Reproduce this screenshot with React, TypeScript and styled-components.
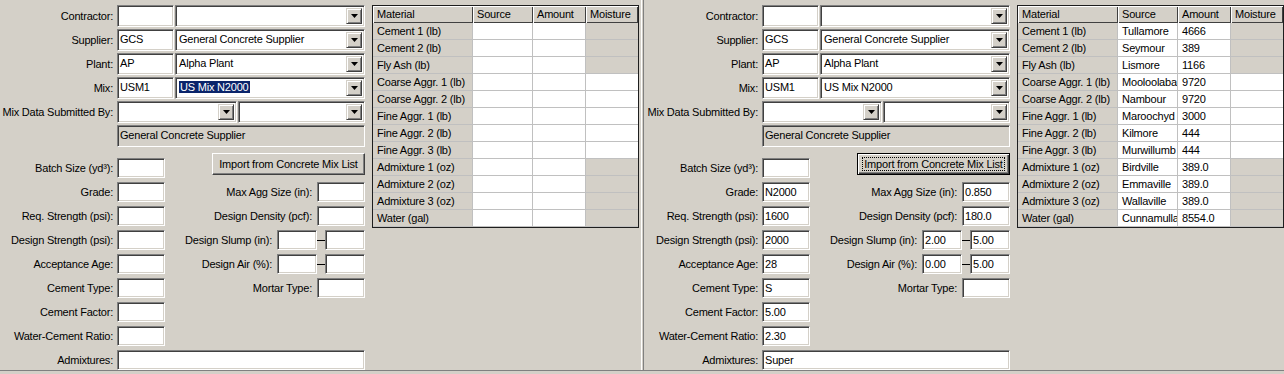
import React from 'react';
import styled, { createGlobalStyle, css } from 'styled-components';

const GlobalStyle = createGlobalStyle`
  html, body {
    margin: 0;
    padding: 0;
    background: #d4d0c8;
  }
  body {
    font-family: "Liberation Sans", Arial, sans-serif;
    font-size: 11px;
    letter-spacing: -0.2px;
    color: #000;
    overflow: hidden;
  }
`;

interface IMixValues {
  batch: string;
  grade: string;
  reqStrength: string;
  designStrength: string;
  age: string;
  cementType: string;
  cementFactor: string;
  wcRatio: string;
  admixtures: string;
  maxAgg: string;
  density: string;
  slump: [string, string];
  air: [string, string];
  mortar: string;
}

interface IPanel {
  values: IMixValues;
  sources: string[];
  amounts: string[];
  highlightMix?: boolean;
  importFocused?: boolean;
}

const materials = [
  'Cement 1 (lb)',
  'Cement 2 (lb)',
  'Fly Ash (lb)',
  'Coarse Aggr. 1 (lb)',
  'Coarse Aggr. 2 (lb)',
  'Fine Aggr. 1 (lb)',
  'Fine Aggr. 2 (lb)',
  'Fine Aggr. 3 (lb)',
  'Admixture 1 (oz)',
  'Admixture 2 (oz)',
  'Admixture 3 (oz)',
  'Water (gal)',
];

// moisture is only editable for aggregates
const moistureEditable = [false, false, false, true, true, true, true, true, false, false, false, false];

const Screen = styled.div`
  display: flex;
  width: 1284px;
  height: 370px;
  border-bottom: 1px solid #808080;
  box-shadow: 0 1px 0 #fff;
  overflow: hidden;
`;

const Panel = styled.div`
  flex: none;
  width: 641px;
  box-sizing: border-box;
  display: flex;
  align-items: flex-start;
  gap: 7px;
  padding-top: 5px;
`;

const Separator = styled.div`
  flex: none;
  width: 1px;
  border-left: 1px solid #fff;
  border-right: 1px solid #808080;
  margin-right: 1px;
`;

const Form = styled.div`
  flex: none;
  width: 365px;
  display: flex;
  flex-direction: column;
`;

const TopGrid = styled.div`
  display: grid;
  grid-template-columns: 113px 248px;
  grid-auto-rows: 22px;
  column-gap: 4px;
  row-gap: 2px;
`;

const Label = styled.div`
  align-self: center;
  text-align: right;
  white-space: nowrap;
`;

const FieldGroup = styled.div`
  display: flex;
  gap: 1px;
  height: 100%;
`;

const sunken = css`
  box-sizing: border-box;
  border: 1px solid;
  border-color: #808080 #fff #fff #808080;
  box-shadow: inset 1px 1px 0 #404040, inset -1px -1px 0 #d4d0c8;
`;

const TextBox = styled.div<{ $w?: number; $readOnly?: boolean; $top?: boolean }>`
  ${sunken};
  flex: ${(p) => (p.$w ? 'none' : '1')};
  width: ${(p) => (p.$w ? `${p.$w}px` : 'auto')};
  height: 100%;
  background: ${(p) => (p.$readOnly ? '#d4d0c8' : '#fff')};
  padding: ${(p) => (p.$top ? '0 2px 2px' : '0 2px')};
  display: flex;
  align-items: center;
  white-space: nowrap;
  overflow: hidden;
`;

const ComboBox = styled.div<{ $w?: number }>`
  ${sunken};
  flex: ${(p) => (p.$w ? 'none' : '1')};
  width: ${(p) => (p.$w ? `${p.$w}px` : 'auto')};
  height: 100%;
  background: #fff;
  padding: 2px;
  display: flex;
`;

const ComboText = styled.div`
  flex: 1;
  padding: 0 0 2px 1px;
  display: flex;
  align-items: center;
  white-space: nowrap;
  overflow: hidden;
`;

const Selected = styled.span`
  background: #0a246a;
  color: #fff;
  padding: 0 1px;
`;

const DropButton = styled.div`
  flex: none;
  width: 16px;
  height: 100%;
  box-sizing: border-box;
  background: #d4d0c8;
  border: 1px solid;
  border-color: #d4d0c8 #404040 #404040 #d4d0c8;
  box-shadow: inset 1px 1px 0 #fff, inset -1px -1px 0 #808080;
  display: flex;
  align-items: center;
  justify-content: center;
`;

const BottomGrid = styled.div`
  margin-top: 11px;
  display: grid;
  grid-template-columns: 165px 200px;
  grid-auto-rows: 20px;
  row-gap: 4px;
`;

const Field = styled.div<{ $wide?: boolean; $gap?: number }>`
  display: flex;
  align-items: center;
  justify-content: flex-end;
  gap: ${(p) => p.$gap ?? 4}px;
  grid-column: ${(p) => (p.$wide ? '1 / -1' : 'auto')};
  height: 20px;
`;

const RangeGroup = styled.div`
  display: flex;
  align-items: center;
  height: 100%;
`;

const Dash = styled.div`
  width: 8px;
  height: 1px;
  background: #000;
`;

const ImportButton = styled.div<{ $focused?: boolean }>`
  position: relative;
  justify-self: end;
  align-self: start;
  margin-top: -5px;
  width: 153px;
  height: 22px;
  box-sizing: border-box;
  background: #d4d0c8;
  display: flex;
  align-items: center;
  justify-content: center;
  white-space: nowrap;
  padding-bottom: 1px;
  border: 1px solid;
  ${(p) =>
    p.$focused
      ? css`
          border-color: #000;
          box-shadow: inset 1px 1px 0 #fff, inset -1px -1px 0 #404040, inset -2px -2px 0 #808080;
          &::after {
            content: '';
            position: absolute;
            inset: 3px 4px 3px 4px;
            border: 1px dotted #000;
          }
        `
      : css`
          border-color: #fff #404040 #404040 #fff;
          box-shadow: inset -1px -1px 0 #808080;
        `}
`;

const MatTable = styled.div`
  flex: none;
  display: grid;
  grid-template-columns: 100px 60px 53px 52px;
  grid-auto-rows: 17px;
  border: 1px solid #1e1e1e;
`;

const HeadCell = styled.div`
  box-sizing: border-box;
  background: #d4d0c8;
  box-shadow: inset 1px 1px 0 #fff, inset -1px -1px 0 #404040;
  padding: 0 4px 1px;
  line-height: 16px;
  white-space: nowrap;
  overflow: hidden;
`;

const Cell = styled.div<{ $gray?: boolean; $last?: boolean }>`
  box-sizing: border-box;
  background: ${(p) => (p.$gray ? '#d4d0c8' : '#fff')};
  border-bottom: 1px solid #c0c0c0;
  border-right: ${(p) => (p.$last ? 'none' : '1px solid #c0c0c0')};
  padding: 0 3px 0 4px;
  line-height: 16px;
  white-space: nowrap;
  overflow: hidden;
`;

const Arrow = () => (
  <svg width="7" height="4" viewBox="0 0 7 4">
    <path d="M0 0h7L3.5 4z" fill="#000" />
  </svg>
);

const Combo: React.FC<{ w?: number; children?: React.ReactNode }> = ({ w, children }) => (
  <ComboBox $w={w}>
    <ComboText>{children}</ComboText>
    <DropButton>
      <Arrow />
    </DropButton>
  </ComboBox>
);

const SmallField: React.FC<{ label: string; value: string }> = ({ label, value }) => (
  <Field>
    <Label>{label}</Label>
    <TextBox $w={48}>{value}</TextBox>
  </Field>
);

const RightField: React.FC<{ label: string; value: string }> = ({ label, value }) => (
  <Field $gap={5}>
    <Label>{label}</Label>
    <TextBox $w={48}>{value}</TextBox>
  </Field>
);

const RangeField: React.FC<{ label: string; range: [string, string] }> = ({ label, range }) => (
  <Field $gap={5}>
    <Label>{label}</Label>
    <RangeGroup>
      <TextBox $w={40}>{range[0]}</TextBox>
      <Dash />
      <TextBox $w={40}>{range[1]}</TextBox>
    </RangeGroup>
  </Field>
);

const MixPanel: React.FC<IPanel> = ({ values, sources, amounts, highlightMix, importFocused }) => (
  <Panel>
    <Form>
      <TopGrid>
        <Label>Contractor:</Label>
        <FieldGroup>
          <TextBox $w={57} $top />
          <Combo />
        </FieldGroup>
        <Label>Supplier:</Label>
        <FieldGroup>
          <TextBox $w={57} $top>GCS</TextBox>
          <Combo>General Concrete Supplier</Combo>
        </FieldGroup>
        <Label>Plant:</Label>
        <FieldGroup>
          <TextBox $w={57} $top>AP</TextBox>
          <Combo>Alpha Plant</Combo>
        </FieldGroup>
        <Label>Mix:</Label>
        <FieldGroup>
          <TextBox $w={57} $top>USM1</TextBox>
          <Combo>{highlightMix ? <Selected>US Mix N2000</Selected> : 'US Mix N2000'}</Combo>
        </FieldGroup>
        <Label>Mix Data Submitted By:</Label>
        <FieldGroup>
          <Combo w={120} />
          <Combo />
        </FieldGroup>
        <div />
        <TextBox $readOnly $top>General Concrete Supplier</TextBox>
      </TopGrid>

      <BottomGrid>
        <SmallField label="Batch Size (yd³):" value={values.batch} />
        <ImportButton $focused={importFocused}>Import from Concrete Mix List</ImportButton>
        <SmallField label="Grade:" value={values.grade} />
        <RightField label="Max Agg Size (in):" value={values.maxAgg} />
        <SmallField label="Req. Strength (psi):" value={values.reqStrength} />
        <RightField label="Design Density (pcf):" value={values.density} />
        <SmallField label="Design Strength (psi):" value={values.designStrength} />
        <RangeField label="Design Slump (in):" range={values.slump} />
        <SmallField label="Acceptance Age:" value={values.age} />
        <RangeField label="Design Air (%):" range={values.air} />
        <SmallField label="Cement Type:" value={values.cementType} />
        <RightField label="Mortar Type:" value={values.mortar} />
        <SmallField label="Cement Factor:" value={values.cementFactor} />
        <div />
        <SmallField label="Water-Cement Ratio:" value={values.wcRatio} />
        <div />
        <Field $wide>
          <Label>Admixtures:</Label>
          <TextBox $w={248}>{values.admixtures}</TextBox>
        </Field>
      </BottomGrid>
    </Form>

    <MatTable>
      <HeadCell>Material</HeadCell>
      <HeadCell>Source</HeadCell>
      <HeadCell>Amount</HeadCell>
      <HeadCell>Moisture</HeadCell>
      {materials.map((m, i) => (
        <React.Fragment key={m}>
          <Cell $gray>{m}</Cell>
          <Cell>{sources[i]}</Cell>
          <Cell>{amounts[i]}</Cell>
          <Cell $gray={!moistureEditable[i]} $last />
        </React.Fragment>
      ))}
    </MatTable>
  </Panel>
);

const emptyValues: IMixValues = {
  batch: '',
  grade: '',
  reqStrength: '',
  designStrength: '',
  age: '',
  cementType: '',
  cementFactor: '',
  wcRatio: '',
  admixtures: '',
  maxAgg: '',
  density: '',
  slump: ['', ''],
  air: ['', ''],
  mortar: '',
};

const importedValues: IMixValues = {
  batch: '',
  grade: 'N2000',
  reqStrength: '1600',
  designStrength: '2000',
  age: '28',
  cementType: 'S',
  cementFactor: '5.00',
  wcRatio: '2.30',
  admixtures: 'Super',
  maxAgg: '0.850',
  density: '180.0',
  slump: ['2.00', '5.00'],
  air: ['0.00', '5.00'],
  mortar: '',
};

const blank = materials.map(() => '');

const sources = [
  'Tullamore',
  'Seymour',
  'Lismore',
  'Mooloolaba',
  'Nambour',
  'Maroochyd',
  'Kilmore',
  'Murwillumb',
  'Birdville',
  'Emmaville',
  'Wallaville',
  'Cunnamulla',
];

const amounts = ['4666', '389', '1166', '9720', '9720', '3000', '444', '444', '389.0', '389.0', '389.0', '8554.0'];

export default function App() {
  return (
    <>
      <GlobalStyle />
      <Screen>
        <MixPanel values={emptyValues} sources={blank} amounts={blank} highlightMix />
        <Separator />
        <MixPanel values={importedValues} sources={sources} amounts={amounts} importFocused />
      </Screen>
    </>
  );
}
